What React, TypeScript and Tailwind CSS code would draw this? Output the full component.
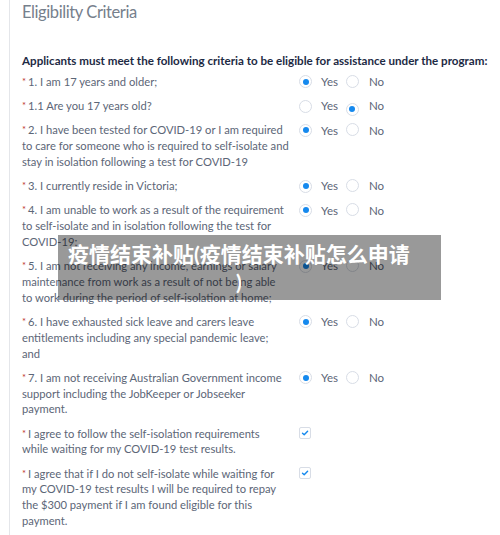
import React from "react";

type Q = { lines: string[]; kind: "radio" | "check"; value?: "yes" | "no" };

const rows: Q[] = [
  { lines: ["1. I am 17 years and older;"], kind: "radio", value: "yes" },
  { lines: ["1.1 Are you 17 years old?"], kind: "radio", value: "no" },
  {
    lines: [
      "2. I have been tested for COVID-19 or I am required",
      "to care for someone who is required to self-isolate and",
      "stay in isolation following a test for COVID-19",
    ],
    kind: "radio",
    value: "yes",
  },
  { lines: ["3. I currently reside in Victoria;"], kind: "radio", value: "yes" },
  {
    lines: [
      "4. I am unable to work as a result of the requirement",
      "to self-isolate and in isolation following the test for",
      "COVID-19;",
    ],
    kind: "radio",
    value: "yes",
  },
  {
    lines: [
      "5. I am not receiving any income, earnings or salary",
      "maintenance from work as a result of not being able",
      "to work during the period of self-isolation at home;",
    ],
    kind: "radio",
    value: "yes",
  },
  {
    lines: [
      "6. I have exhausted sick leave and carers leave",
      "entitlements including any special pandemic leave;",
      "and",
    ],
    kind: "radio",
    value: "yes",
  },
  {
    lines: [
      "7. I am not receiving Australian Government income",
      "support including the JobKeeper or Jobseeker",
      "payment.",
    ],
    kind: "radio",
    value: "yes",
  },
  {
    lines: [
      "I agree to follow the self-isolation requirements",
      "while waiting for my COVID-19 test results.",
    ],
    kind: "check",
  },
  {
    lines: [
      "I agree that if I do not self-isolate while waiting for",
      "my COVID-19 test results I will be required to repay",
      "the $300 payment if I am found eligible for this",
      "payment.",
    ],
    kind: "check",
  },
];

function Radio({ on }: { on: boolean }) {
  return (
    <span className="inline-flex h-[13px] w-[13px] shrink-0 items-center justify-center rounded-full border border-[#d8dde6] bg-white">
      {on && <span className="h-[6px] w-[6px] rounded-full bg-[#1589ee]" />}
    </span>
  );
}

function Check() {
  return (
    <span className="inline-flex h-[12px] w-[12px] items-center justify-center rounded-[2px] border border-[#d8dde6] bg-white">
      <svg width="8" height="8" viewBox="0 0 8 8">
        <path d="M1.5 4.2 L3.2 5.8 L6.6 2.2" fill="none" stroke="#1589ee" strokeWidth="1.4" strokeLinecap="round" strokeLinejoin="round" />
      </svg>
    </span>
  );
}

export default function App() {
  return (
    <div
      className="relative h-[535px] w-[500px] overflow-hidden bg-white"
      style={{ fontFamily: 'Lato, "Noto Sans CJK SC", sans-serif' }}
    >
      <div className="ml-[9px] h-full border-l border-[#e4e6ea] pl-[12px]">
        <div className="pt-[1px] text-[16.5px] leading-[22px] tracking-[-0.4px] text-[#76808c]">
          Eligibility Criteria
        </div>
        <div className="mt-[30px] whitespace-nowrap text-[11.6px] font-bold leading-[16px] text-[#1d2a44]">
          Applicants must meet the following criteria to be eligible for assistance under the program:
        </div>
        <div className="mt-[5px] flex flex-col gap-[8.3px]">
          {rows.map((r, i) => (
            <div key={i} className="flex">
              <div className="w-[271px] text-[11.2px] leading-[15.85px] text-[#5c6677]">
                {r.lines.map((l, j) => (
                  <div key={j} className="whitespace-nowrap">
                    {j === 0 && (
                      <span className="relative -top-[1px] mr-[2px] text-[9.5px] leading-none text-[#c23934]">*</span>
                    )}
                    {l}
                  </div>
                ))}
              </div>
              <div className="ml-[6px] flex h-[15.85px] items-center">
                {r.kind === "radio" ? (
                  <>
                    <Radio on={r.value === "yes"} />
                    <span className="ml-[9px] text-[11.5px] text-[#5c6677]">Yes</span>
                    <span className="ml-[8px]">
                      <Radio on={r.value === "no"} />
                    </span>
                    <span className="ml-[10px] text-[11.5px] text-[#5c6677]">No</span>
                  </>
                ) : (
                  <Check />
                )}
              </div>
            </div>
          ))}
        </div>
      </div>
      <div className="absolute left-[58px] top-[235px] flex h-[65px] w-[383px] flex-col justify-center bg-black/40 pl-[10px] pr-[31px] text-center text-[21px] font-bold leading-[28px] text-white">
        <div className="whitespace-nowrap">疫情结束补贴(疫情结束补贴怎么申请</div>
        <div>)</div>
      </div>
    </div>
  );
}
